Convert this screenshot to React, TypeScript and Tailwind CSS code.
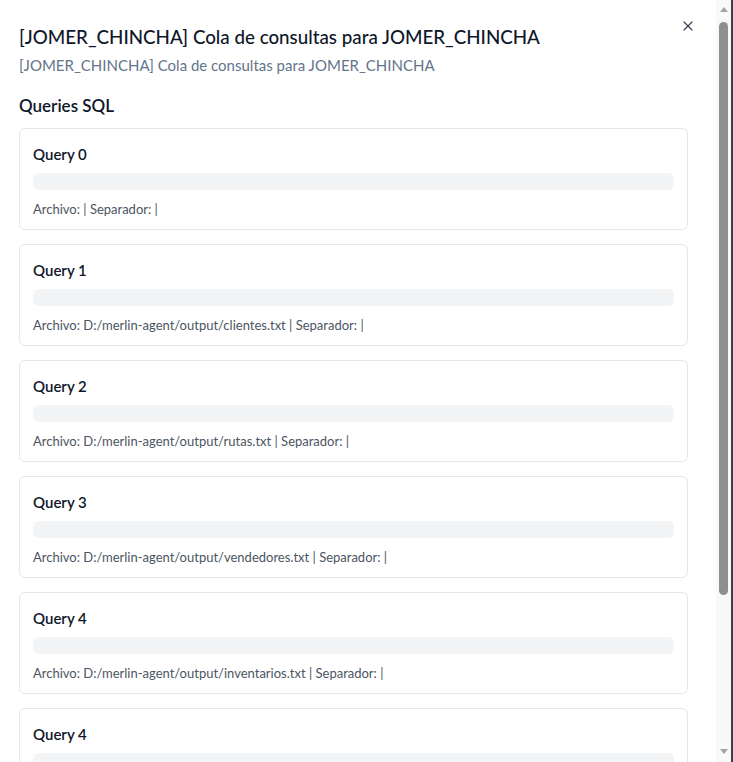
import { X } from "lucide-react";

const queries = [
  { name: "Query 0", file: "", sep: "|" },
  { name: "Query 1", file: "D:/merlin-agent/output/clientes.txt", sep: "|" },
  { name: "Query 2", file: "D:/merlin-agent/output/rutas.txt", sep: "|" },
  { name: "Query 3", file: "D:/merlin-agent/output/vendedores.txt", sep: "|" },
  { name: "Query 4", file: "D:/merlin-agent/output/inventarios.txt", sep: "|" },
  { name: "Query 4", file: "D:/merlin-agent/output/stock.txt", sep: "|" },
  { name: "Query 5", file: "D:/merlin-agent/output/precios.txt", sep: "|" },
];

function QueryCard({ name, file, sep }: { name: string; file: string; sep: string }) {
  return (
    <div className="h-[102px] shrink-0 rounded-md border border-[#e2e8f0] bg-white px-[13px] pt-[14px]">
      <h4 className="text-[15px] font-semibold leading-[22px] text-[#0f172a]">{name}</h4>
      <div className="mt-[8px] h-[17px] rounded-md bg-[#f3f4f6]" />
      <p className="mt-[10px] text-[13px] leading-[18px] text-[#4b5563]">
        Archivo: {file}{file ? " " : ""}| Separador: {sep}
      </p>
    </div>
  );
}

function FakeScrollbar() {
  return (
    <div className="flex w-[15px] shrink-0 flex-col items-center bg-[#f9f9f9]">
      <span className="mt-[7px] h-0 w-0 border-x-[4px] border-b-[5px] border-x-transparent border-b-[#a3a3a3]" />
      <div className="mt-[10px] h-[573px] w-[9px] rounded-full bg-[#8f8f8f]" />
      <div className="flex-1" />
      <span className="mb-[8px] h-0 w-0 border-x-[4px] border-t-[5px] border-x-transparent border-t-[#a3a3a3]" />
    </div>
  );
}

export default function App() {
  return (
    <div className="flex h-[762px] w-[733px] bg-white font-['Lato',sans-serif]">
      <div className="relative h-full w-[716px] shrink-0 overflow-y-scroll [scrollbar-width:none]">
        <button className="absolute right-[20px] top-[18px] text-[#374151]">
          <X className="h-4 w-4" strokeWidth={1.75} />
        </button>
        <div className="pl-[19px] pr-[28px] pt-[24px] pb-[30px]">
          <h2 className="text-[18.75px] font-medium leading-[26px] text-[#0f172a]">
            [JOMER_CHINCHA] Cola de consultas para JOMER_CHINCHA
          </h2>
          <p className="mt-[4px] text-[15px] leading-[22px] text-[#64748b]">
            [JOMER_CHINCHA] Cola de consultas para JOMER_CHINCHA
          </p>
          <h3 className="mt-[18px] text-[17px] font-semibold leading-[24px] text-[#0f172a]">Queries SQL</h3>
          <div className="mt-[10px] flex flex-col gap-[14px]">
            {queries.map((q, i) => (
              <QueryCard key={i} {...q} />
            ))}
          </div>
        </div>
      </div>
      <FakeScrollbar />
      <div className="w-[2px] bg-[#3f3f46]" />
    </div>
  );
}
